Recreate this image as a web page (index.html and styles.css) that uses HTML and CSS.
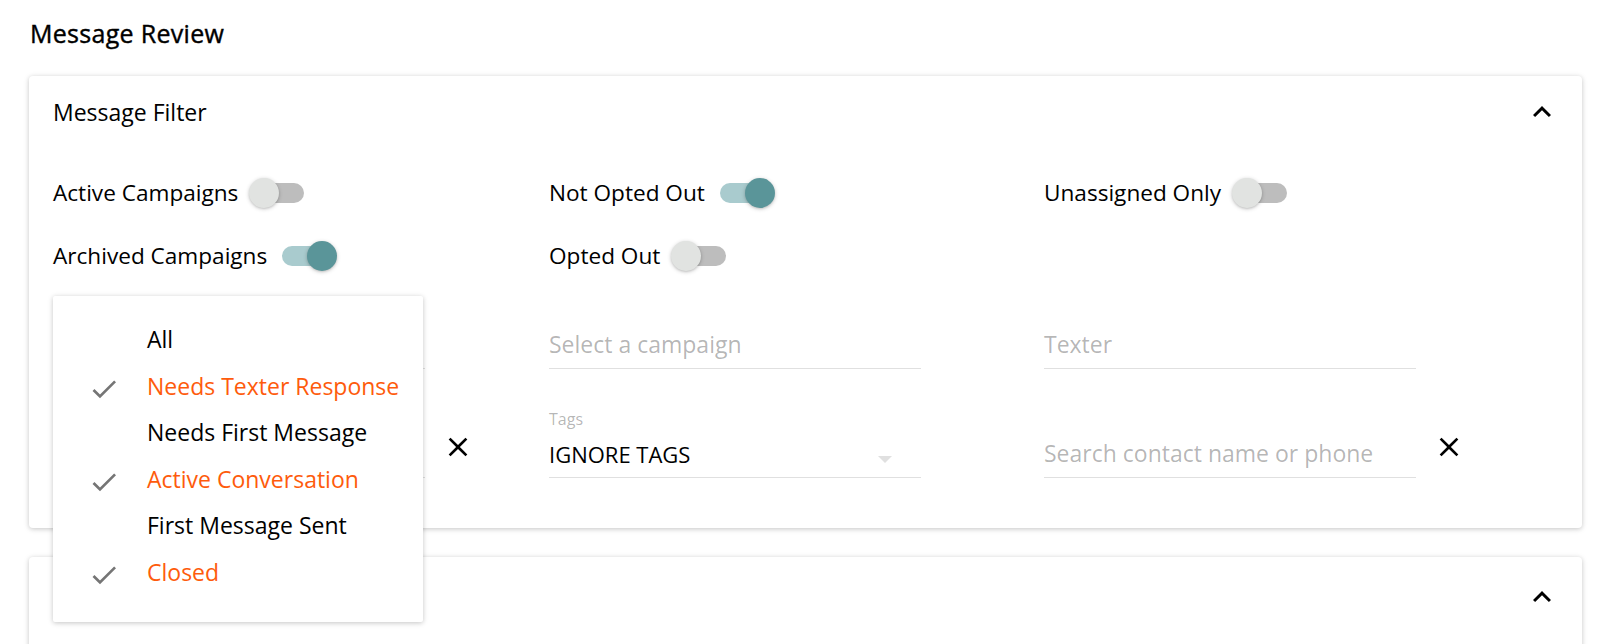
FILE: index.html
```html
<!DOCTYPE html>
<html lang="en">
<head>
<meta charset="utf-8">
<title>Message Review</title>
<link rel="stylesheet" href="styles.css">
</head>
<body>
<div class="page">
  <h1 class="page-title">Message Review</h1>

  <section class="card">
    <div class="card-header">
      <span class="card-title">Message Filter</span>
      <svg class="chevron" viewBox="0 0 24 24"><path d="M12 8l-6 6 1.41 1.41L12 10.83l4.59 4.58L18 14z"/></svg>
    </div>

    <div class="toggles">
      <div class="toggle-row"><span class="toggle-label">Active Campaigns</span><span class="switch"><span class="thumb"></span></span></div>
      <div class="toggle-row"><span class="toggle-label">Not Opted Out</span><span class="switch on"><span class="thumb"></span></span></div>
      <div class="toggle-row"><span class="toggle-label">Unassigned Only</span><span class="switch"><span class="thumb"></span></span></div>
      <div class="toggle-row"><span class="toggle-label">Archived Campaigns</span><span class="switch on"><span class="thumb"></span></span></div>
      <div class="toggle-row"><span class="toggle-label">Opted Out</span><span class="switch"><span class="thumb"></span></span></div>
      <div class="toggle-row"></div>
    </div>

    <div class="fields">
      <div class="cell"><div class="field"><span class="value"></span></div></div>
      <div class="cell"><div class="field"><span class="placeholder">Select a campaign</span></div></div>
      <div class="cell"><div class="field"><span class="placeholder">Texter</span></div></div>

      <div class="cell"><div class="field"><span class="value"></span></div>
        <svg class="clear" viewBox="0 0 24 24"><path d="M19 6.41L17.59 5 12 10.59 6.41 5 5 6.41 10.59 12 5 17.59 6.41 19 12 13.41 17.59 19 19 17.59 13.41 12z"/></svg></div>
      <div class="cell"><div class="field select-field">
          <span class="float-label">Tags</span>
          <span class="value">IGNORE TAGS</span>
          <svg class="caret" viewBox="7 10 10 5"><path d="M7 10l5 5 5-5z"/></svg>
        </div></div>
      <div class="cell"><div class="field"><span class="placeholder">Search contact name or phone</span></div>
        <svg class="clear" viewBox="0 0 24 24"><path d="M19 6.41L17.59 5 12 10.59 6.41 5 5 6.41 10.59 12 5 17.59 6.41 19 12 13.41 17.59 19 19 17.59 13.41 12z"/></svg></div>
    </div>

    <ul class="menu">
      <li class="item">All</li>
      <li class="item checked"><svg class="check" viewBox="0 0 24 24"><path d="M9 16.17L4.83 12l-1.42 1.41L9 19 21 7l-1.41-1.41z"/></svg>Needs Texter Response</li>
      <li class="item">Needs First Message</li>
      <li class="item checked"><svg class="check" viewBox="0 0 24 24"><path d="M9 16.17L4.83 12l-1.42 1.41L9 19 21 7l-1.41-1.41z"/></svg>Active Conversation</li>
      <li class="item">First Message Sent</li>
      <li class="item checked"><svg class="check" viewBox="0 0 24 24"><path d="M9 16.17L4.83 12l-1.42 1.41L9 19 21 7l-1.41-1.41z"/></svg>Closed</li>
    </ul>
  </section>

  <section class="card card-second">
    <div class="card-header second-header">
      <span class="card-title"></span>
      <svg class="chevron" viewBox="0 0 24 24"><path d="M12 8l-6 6 1.41 1.41L12 10.83l4.59 4.58L18 14z"/></svg>
    </div>
  </section>
</div>
</body>
</html>
```

FILE: styles.css
```css
html, body {
  margin: 0;
  padding: 0;
  background: #fff;
  overflow: hidden;
  height: 644px;
}

body {
  font-family: "Open Sans", "DejaVu Sans", sans-serif;
  color: rgba(0, 0, 0, 0.87);
}

.page {
  padding: 18px 18px 0 29px;
  height: 644px;
  box-sizing: border-box;
  overflow: hidden;
}

.page-title {
  margin: 0 0 28px 1px;
  font-size: 25px;
  line-height: 30px;
  font-weight: 400;
  letter-spacing: 0.3px;
  -webkit-text-stroke: 0.4px #000;
  color: #000;
}

.card {
  position: relative;
  background: #fff;
  border-radius: 4px;
  box-shadow: rgba(0, 0, 0, 0.12) 0 1px 6px, rgba(0, 0, 0, 0.12) 0 1px 4px;
  padding: 22px 24px 50px 24px;
}

.card-header {
  display: flex;
  align-items: center;
  justify-content: space-between;
  height: 28px;
}

.card-title {
  font-size: 23px;
  line-height: 28px;
  color: #000;
}

.chevron {
  width: 36px;
  height: 36px;
  margin-right: -2px;
  fill: #000;
}

.toggles {
  margin-top: 47px;
  display: grid;
  grid-template-columns: 496px 495px 1fr;
  grid-auto-rows: 40px;
  row-gap: 23px;
}

.toggle-row {
  display: flex;
  align-items: center;
}

.toggle-label {
  font-size: 22.6px;
  line-height: 28px;
  color: #000;
}

.switch {
  position: relative;
  width: 51px;
  height: 20px;
  margin-left: 15px;
  border-radius: 10px;
  background: #bdbdbd;
}

.switch .thumb {
  position: absolute;
  top: -5px;
  left: -4px;
  width: 30px;
  height: 30px;
  border-radius: 50%;
  background: #e1e3e1;
  box-shadow: rgba(0, 0, 0, 0.2) 0 1px 4px, rgba(0, 0, 0, 0.1) 0 1px 2px;
}

.switch.on {
  background: #a9cbce;
}

.switch.on .thumb {
  left: auto;
  right: -4px;
  background: #5a9599;
}

.fields {
  margin-top: 21px;
  display: grid;
  grid-template-columns: 496px 495px 1fr;
  grid-auto-rows: 72px;
  row-gap: 37px;
}

.cell {
  display: flex;
  align-items: flex-end;
}

.field {
  position: relative;
  width: 372px;
  display: flex;
  flex-direction: column;
  padding-bottom: 10px;
  border-bottom: 1px solid #e0e0e0;
}

.placeholder, .value {
  font-size: 23px;
  line-height: 28px;
  height: 28px;
  white-space: nowrap;
}

.placeholder {
  color: rgba(0, 0, 0, 0.3);
}

.value {
  color: #000;
}

.select-field {
  padding-bottom: 9px;
}

.float-label {
  font-size: 16px;
  line-height: 20px;
  color: rgba(0, 0, 0, 0.3);
  margin-bottom: 11px;
}

.select-field .value {
  font-size: 22px;
}

.caret {
  position: absolute;
  right: 29px;
  bottom: 14px;
  width: 14px;
  height: 7px;
  fill: #e0e0e0;
}

.clear {
  width: 32px;
  height: 32px;
  margin-left: 17px;
  margin-bottom: 15px;
  fill: #000;
}

.menu {
  position: absolute;
  left: 24px;
  top: 220px;
  width: 370px;
  height: 326px;
  box-sizing: border-box;
  margin: 0;
  padding: 20px 0 0 94px;
  list-style: none;
  background: #fff;
  border-radius: 2px;
  box-shadow: rgba(0, 0, 0, 0.12) 0 1px 6px, rgba(0, 0, 0, 0.12) 0 1px 4px;
  z-index: 5;
}

.item {
  position: relative;
  height: 46.5px;
  line-height: 46.5px;
  font-size: 23px;
  color: #000;
  white-space: nowrap;
}

.item.checked {
  color: #fe5b0c;
}

.check {
  position: absolute;
  left: -59px;
  top: 10px;
  width: 32px;
  height: 32px;
  fill: #757575;
}

.card-second {
  margin-top: 29px;
  height: 200px;
  padding: 0 24px;
}

.second-header {
  height: 80px;
  align-items: center;
}
```
